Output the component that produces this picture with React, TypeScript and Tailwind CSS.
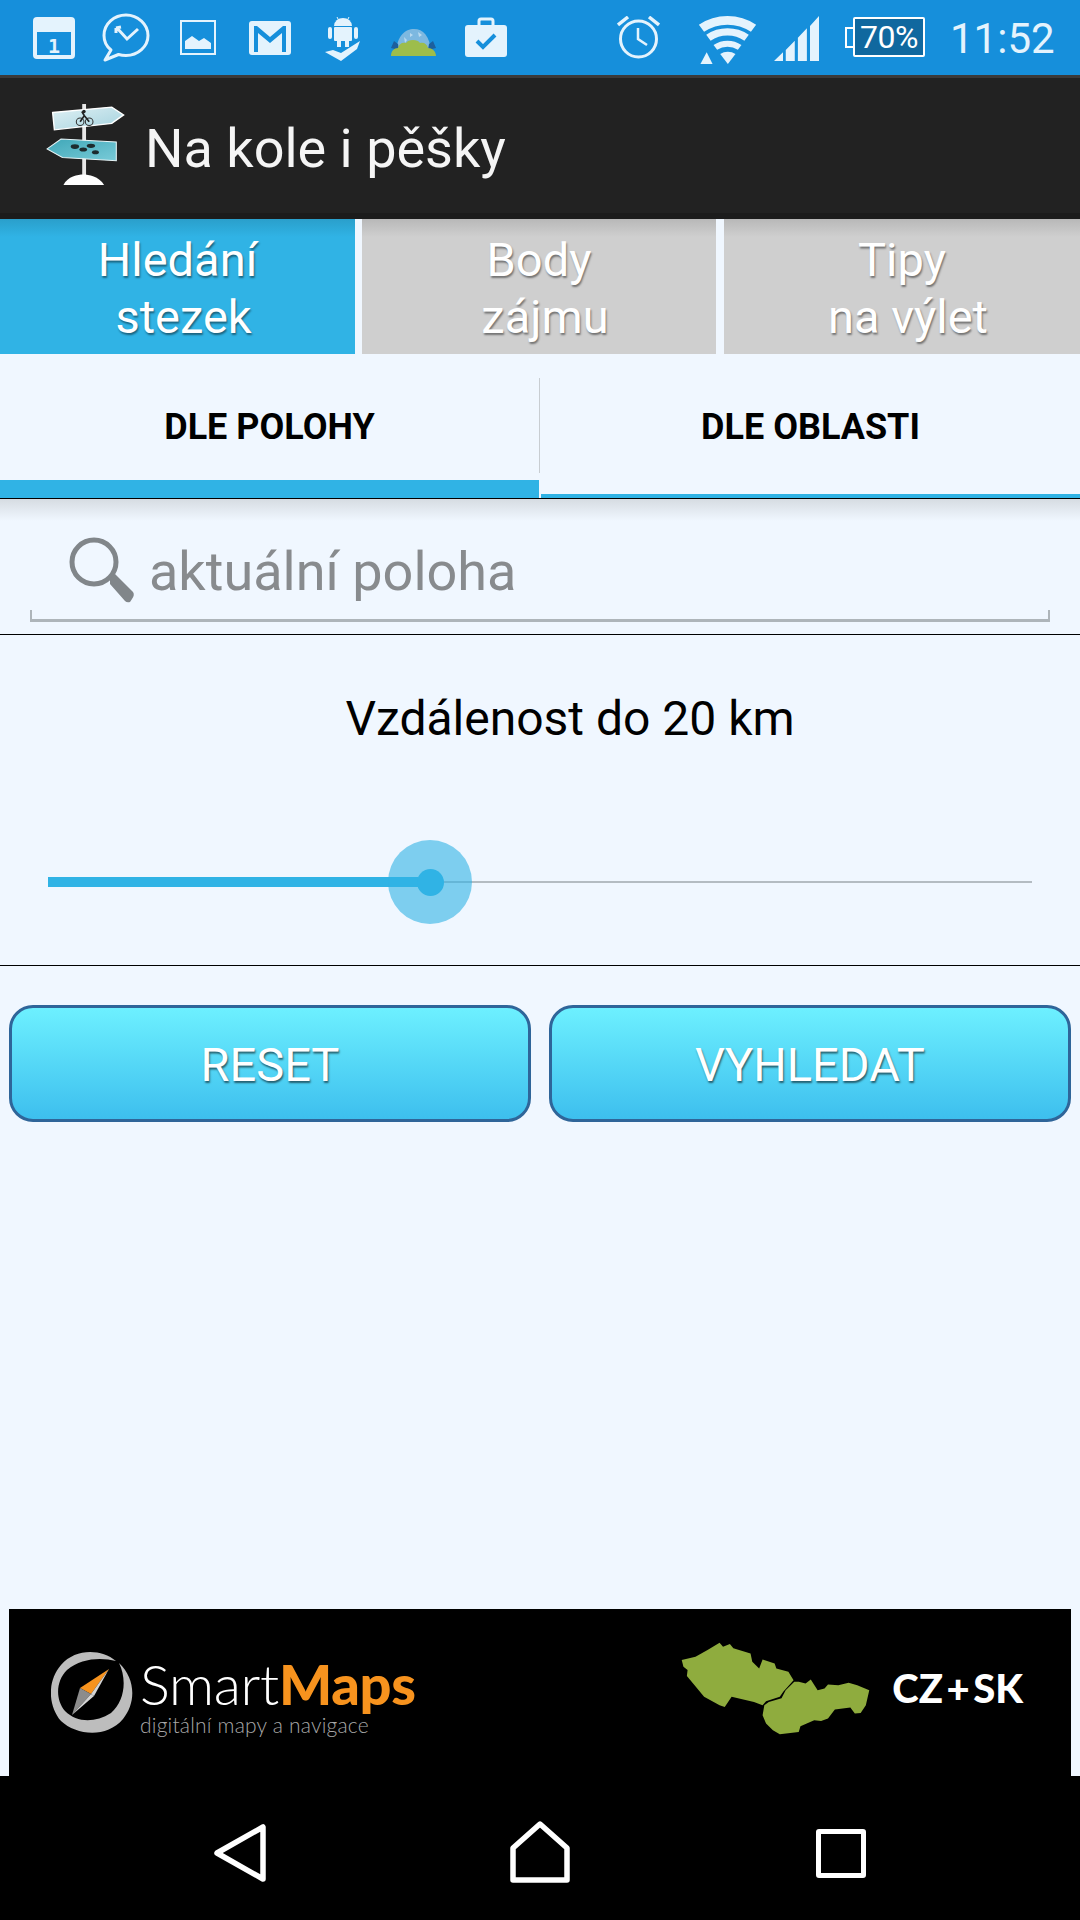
import React from "react";

const ink = "#e4f3fd";
const blue = "#168fdb";

function StatusIcons() {
  return (
    <div className="flex items-start h-[75px] bg-[#168fdb] font-['Roboto',sans-serif]">
      {/* calendar */}
      <svg className="ml-[33px] mt-[17px] w-[42px] h-[42px]" viewBox="0 0 42 42">
        <rect width="42" height="42" rx="4" fill={ink} />
        <rect x="4" y="15" width="34" height="23" fill={blue} />
        <text x="21" y="36" textAnchor="middle" fontFamily="'DejaVu Sans Mono',monospace" fontWeight="700" fontSize="20" fill={ink}>1</text>
      </svg>
      {/* messenger */}
      <svg className="ml-[27px] mt-[13px] w-[48px] h-[49px]" viewBox="0 0 48 49">
        <path d="M24 2C12 2 2 11 2 22.500c0 6 2.500 11 7 14.500L3 47l13.500-5.500c2.500.7 5 1 7.500 1 12 0 22-9 22-20S36 2 24 2z" fill="none" stroke={ink} strokeWidth="3" strokeLinejoin="round" />
        <path d="M15 15l10 11 11-10M14 15l5-1M14 15v5" fill="none" stroke={ink} strokeWidth="3" />
      </svg>
      {/* picture */}
      <svg className="ml-[30px] mt-[20px] w-[36px] h-[35px]" viewBox="0 0 36 35">
        <rect x="1" y="1" width="34" height="33" fill="none" stroke={ink} strokeWidth="2" />
        <path d="M5 29V21l7-5 7 5 5-3 7 5v6z" fill={ink} />
      </svg>
      {/* gmail */}
      <svg className="ml-[33px] mt-[21px] w-[42px] h-[34px]" viewBox="0 0 42 34">
        <rect width="42" height="34" rx="3" fill={ink} />
        <path d="M5 31V5h3l13 11L34 5h3v26h-4V12L21 22 9 12v19z" fill={blue} />
      </svg>
      {/* android + check */}
      <svg className="ml-[34px] mt-[16px] w-[36px] h-[45px]" viewBox="0 0 36 45">
        <path d="M9 10a9 8 0 0 1 18 0z" fill={ink} />
        <path d="M12 1l2 4M24 1l-2 4" stroke={ink} strokeWidth="1" />
        <rect x="9" y="11" width="18" height="14" rx="1" fill={ink} />
        <rect x="3" y="11" width="4" height="12" rx="2" fill={ink} />
        <rect x="29" y="11" width="4" height="12" rx="2" fill={ink} />
        <rect x="12" y="24" width="4" height="7" fill={ink} />
        <rect x="20" y="24" width="4" height="7" fill={ink} />
        <path d="M0 36l8-2 8 3L35 25l-3 8-16 12z" fill={ink} />
      </svg>
      {/* globe + androids */}
      <svg className="ml-[29px] mt-[28px] w-[47px] h-[29px]" viewBox="0 0 47 29">
        <path d="M6 24C7 8 15 1 24 1s16 7 17 23z" fill="#7db8e0" />
        <path d="M14 9l3 3-2 3zM28 4l4 3-3 2zM20 5l3 2-3 2z" fill="#b9daf0" />
        <path d="M1 20l3-7 4 3 1 6zM46 20l-3-7-4 3-1 6z" fill="#1c5f9e" />
        <path d="M1 28c0-5 3-8 7-8 1-4 4-6 8-5 2-4 12-4 14 0 4-1 7 1 8 5 4 0 8 3 8 8z" fill="#9dbd4b" />
      </svg>
      {/* briefcase */}
      <svg className="ml-[28px] mt-[17px] w-[42px] h-[40px]" viewBox="0 0 42 40">
        <path d="M14 9V4a2 2 0 0 1 2-2h10a2 2 0 0 1 2 2v5" fill="none" stroke={ink} strokeWidth="3" />
        <rect y="8" width="42" height="32" rx="3" fill={ink} />
        <path d="M12 24l6 6 12-12" fill="none" stroke={blue} strokeWidth="4" />
      </svg>
      {/* alarm */}
      <svg className="ml-[110px] mt-[16px] w-[43px] h-[43px]" viewBox="0 0 43 43">
        <circle cx="21.500" cy="23" r="18" fill="none" stroke={ink} strokeWidth="3" />
        <path d="M21 12v11l9 6" fill="none" stroke={ink} strokeWidth="2.500" />
        <path d="M1 9l10-8M42 9L32 1" stroke={ink} strokeWidth="3.500" />
      </svg>
      {/* wifi */}
      <svg className="ml-[38px] mt-[15px] w-[59px] h-[50px]" viewBox="460 45 170 150" preserveAspectRatio="none">
        <path d="M470 85A130 130 0 0 1 620 85" fill="none" stroke={ink} strokeWidth="26" />
        <path d="M490 113A96 96 0 0 1 600 113" fill="none" stroke={ink} strokeWidth="22" />
        <path d="M510 142A61 61 0 0 1 580 142" fill="none" stroke={ink} strokeWidth="18" />
        <path d="M546 192L524 162A38 38 0 0 1 568 162Z" fill={ink} />
        <path d="M485 157L467 192H502Z" fill={ink} />
      </svg>
      {/* signal */}
      <svg className="ml-[17px] mt-[16px] w-[45px] h-[45px]" viewBox="680 48 130 135" preserveAspectRatio="none">
        <path d="M680 183H706V157Z M714 183H740V122L714 150Z M749 183H775V85L749 113Z M784 183H810V48L784 78Z" fill={ink} />
      </svg>
      {/* battery */}
      <div className="ml-[26px] mt-[17px] flex items-center">
        <div className="w-[9px] h-[21px] border-2 border-r-0 border-white" />
        <div className="w-[72px] h-[40px] -ml-[1px] bg-[#10689f] border-2 border-white rounded-[2px] flex items-center justify-center text-white text-[32px] leading-none tracking-[-0.5px]">
          70%
        </div>
      </div>
      <div className="ml-[25px] mt-[17px] text-[42px] leading-[44px] text-[#e4f3fd]">11:52</div>
    </div>
  );
}

function SignIcon() {
  return (
    <svg className="w-[80px] h-[85px]" viewBox="130 315 230 250" preserveAspectRatio="none">
      <defs>
        <linearGradient id="s1" x1="0" y1="0" x2="1" y2="1">
          <stop offset="0" stopColor="#dff0f4" />
          <stop offset="1" stopColor="#a4d2de" />
        </linearGradient>
        <linearGradient id="s2" x1="0" y1="0" x2="1" y2="1">
          <stop offset="0" stopColor="#3fa7b8" />
          <stop offset="1" stopColor="#79cbd8" />
        </linearGradient>
      </defs>
      <rect x="237" y="318" width="11" height="215" fill="#e8e8e8" />
      <path d="M152 343L322 327L356 350L322 375L157 394Z" fill="url(#s1)" stroke="#fff" strokeWidth="4" />
      <path d="M136 450L176 421L335 430V485L180 475Z" fill="url(#s2)" stroke="#e8f4f6" strokeWidth="3" />
      <path d="M183 556C195 530 225 525 240 525S285 530 300 556Z" fill="#fff" />
      <circle cx="231" cy="370" r="11" fill="none" stroke="#333" strokeWidth="3" />
      <circle cx="257" cy="370" r="11" fill="none" stroke="#333" strokeWidth="3" />
      <path d="M231 370L243 352L257 370M243 352L236 340" fill="none" stroke="#222" strokeWidth="5" />
      <circle cx="242" cy="340" r="5" fill="#222" />
      <ellipse cx="216" cy="443" rx="12" ry="7" fill="#1d2b2e" />
      <ellipse cx="240" cy="452" rx="11" ry="6" fill="#1d2b2e" />
      <ellipse cx="262" cy="441" rx="12" ry="6" fill="#1d2b2e" />
      <ellipse cx="275" cy="460" rx="10" ry="6" fill="#1d2b2e" />
    </svg>
  );
}

function MainTab({ one, two, active, className }: { one: string; two: string; active?: boolean; className: string }) {
  return (
    <div
      className={
        "h-[135px] flex flex-col items-center justify-center pt-[2px] text-[47px] leading-[57px] text-white [text-shadow:1px_2px_2px_rgba(0,0,0,0.45)] " +
        (active
          ? "bg-[linear-gradient(#2a9fcb,#30b3e5_18px)] "
          : "bg-[linear-gradient(#b8b8b8,#cfcfcf_18px)] ") +
        className
      }
    >
      <span>{one}</span>
      <span className="pl-[12px]">{two}</span>
    </div>
  );
}

function CompassLogo() {
  return (
    <svg className="w-[84px] h-[84px] shrink-0" viewBox="0 0 84 84">
      <path d="M65 10C50 -2 25 -3 10 14C-4 30 -3 55 10 70C25 84 55 88 72 68C85 52 85 28 68 12C76 28 74 50 60 62C44 72 26 72 14 60C4 48 5 30 16 19C30 7 50 6 65 10Z" fill="#bdbdbd" />
      <path d="M58 18L29 37L40 43Z" fill="#f7931e" />
      <path d="M29 37L21 64L40 43Z" fill="#8c8c8c" />
      <path d="M21 64L40 43L43 45Z" fill="#d5d5d5" />
      <path d="M58 18L40 43L43 45Z" fill="#d5d5d5" />
    </svg>
  );
}

function MapLogo() {
  return (
    <svg className="w-[191px] h-[97px] shrink-0" viewBox="410 150 555 290" preserveAspectRatio="none">
      <path d="M415 210L455 200L490 180L525 158L535 170L555 162L565 175L615 190L620 215L640 235L650 208L685 220L690 235L725 245L740 270L710 305L700 320L660 333L650 345L625 335L560 320L540 350L525 345L480 320L430 258L432 240L420 230Z" fill="#8fac3e" />
      <path d="M742 275L755 275L775 280L790 268L810 300L830 295L840 283L870 285L900 278L925 285L960 300L950 345L935 368L918 370L905 352L860 358L840 385L820 392L800 390L760 408L755 425L700 432L680 420L660 400L650 375L655 345L668 335L705 324L717 300Z" fill="#8fac3e" />
    </svg>
  );
}

export default function App() {
  return (
    <div className="w-[1080px] h-[1920px] flex flex-col bg-[#f0f7ff] overflow-hidden font-['Roboto',sans-serif]">
      <StatusIcons />
      <div className="h-[3px] bg-[#3a3a3a]" />
      {/* action bar */}
      <div className="h-[141px] bg-[#222222] border-b-[6px] border-[#1c1c1c] flex items-center pl-[45px]">
        <SignIcon />
        <div className="ml-[20px] text-[54px] leading-none text-[#f5f5f5] mt-[6px]">Na kole i pěšky</div>
      </div>
      {/* main tabs */}
      <div className="flex">
        <MainTab one="Hledání" two="stezek" active className="w-[355px]" />
        <MainTab one="Body" two="zájmu" className="w-[354px] ml-[7px]" />
        <MainTab one="Tipy" two="na výlet" className="w-[356px] ml-[8px]" />
      </div>
      {/* sub tabs */}
      <div className="h-[145px] flex border-b border-black text-[36px] font-bold text-black">
        <div className="w-[539px] border-b-[18px] border-[#30b3e5] flex items-center justify-center pt-[20px]">DLE POLOHY</div>
        <div className="w-[2px] flex flex-col pt-[24px] pb-[25px]">
          <div className="flex-1 w-[1px] bg-[#c8cdd2]" />
        </div>
        <div className="flex-1 border-b-[4px] border-[#30b3e5] flex items-center justify-center pt-[6px]">DLE OBLASTI</div>
      </div>
      {/* search */}
      <div className="h-[136px] border-b border-black bg-[linear-gradient(#d6dce2,#f0f7ff_22px)] px-[30px] pt-[38px]">
        <div className="h-[85px] relative flex items-start pl-[39px]">
          <div className="absolute left-0 right-0 bottom-0 h-[12px] border-x-2 border-b-[3px] border-[#aeb5ba]" />
          <svg className="w-[66px] h-[66px] shrink-0" viewBox="0 0 66 66">
            <circle cx="25" cy="25" r="22" fill="none" stroke="#81868a" strokeWidth="5" />
            <path d="M41 41L46 37L64 55Q66 58 63 62L61 65Q58 66 56 64L41 47Z" fill="#81868a" />
          </svg>
          <div className="ml-[14px] text-[54px] leading-[60px] text-[#888b8e] mt-[5px]">aktuální poloha</div>
        </div>
      </div>
      {/* slider */}
      <div className="h-[331px] border-b border-black flex flex-col">
        <div className="text-[48px] leading-[60px] text-black text-center pt-[54px] pl-[60px] h-[60px] box-content">Vzdálenost do 20 km</div>
        <div className="relative flex items-center ml-[48px] w-[984px] h-[84px] mt-[91px]">
          <div className="h-[10px] w-[370px] bg-[#30b3e5]" />
          <div className="h-[2px] flex-1 bg-[#b4bcc2]" />
          <div className="absolute left-[340px] top-0 w-[84px] h-[84px] rounded-full bg-[#30b3e5]/60 flex items-center justify-center">
            <div className="w-[27px] h-[27px] rounded-full bg-[#30b3e5]" />
          </div>
        </div>
      </div>
      {/* buttons */}
      <div className="flex justify-between px-[9px] pt-[39px]">
        <button className="w-[522px] h-[117px] rounded-[24px] border-[3px] border-[#2f6599] bg-[linear-gradient(#6df0ff,#3dbfee)] text-white text-[47px] pt-[4px] [text-shadow:1px_2px_2px_rgba(0,0,0,0.55)]">RESET</button>
        <button className="w-[522px] h-[117px] rounded-[24px] border-[3px] border-[#2f6599] bg-[linear-gradient(#6df0ff,#3dbfee)] text-white text-[47px] pt-[4px] [text-shadow:1px_2px_2px_rgba(0,0,0,0.55)]">VYHLEDAT</button>
      </div>
      {/* banner */}
      <div className="mt-auto mx-[9px] h-[167px] bg-black flex items-start">
        <div className="ml-[42px] mt-[42px]"><CompassLogo /></div>
        <div className="ml-[5px] mt-[50px] flex flex-col font-['Lato',sans-serif]">
          <div className="flex text-[56px] leading-[50px] whitespace-nowrap tracking-[-0.3px]">
            <span className="font-light text-white">Smart</span>
            <span className="font-black text-[#f7931e]">Maps</span>
          </div>
          <div className="text-[21px] leading-[24px] font-light text-[#a8a8a8] tracking-[0.2px] mt-[4px]">digitální mapy a navigace</div>
        </div>
        <div className="ml-auto mt-[31px]"><MapLogo /></div>
        <div className="ml-[21px] mr-[48px] mt-[54px] text-[40px] leading-[50px] font-black text-white font-['Lato',sans-serif] whitespace-nowrap [word-spacing:-6px]">CZ + SK</div>
      </div>
      {/* nav bar */}
      <div className="h-[144px] bg-black flex items-start">
        <svg className="ml-[214px] mt-[47px] w-[53px] h-[60px]" viewBox="0 0 53 60">
          <path d="M3 30L49 4V56Z" fill="none" stroke="#fff" strokeWidth="5.500" strokeLinejoin="round" />
        </svg>
        <svg className="ml-[243px] mt-[45px] w-[60px] h-[62px]" viewBox="0 0 60 62">
          <path d="M3 59V27L30 3L57 27V59Z" fill="none" stroke="#fff" strokeWidth="5.500" strokeLinejoin="round" />
        </svg>
        <div className="ml-[246px] mt-[53px] w-[50px] h-[49px] border-[5px] border-white rounded-[3px]" />
      </div>
    </div>
  );
}
